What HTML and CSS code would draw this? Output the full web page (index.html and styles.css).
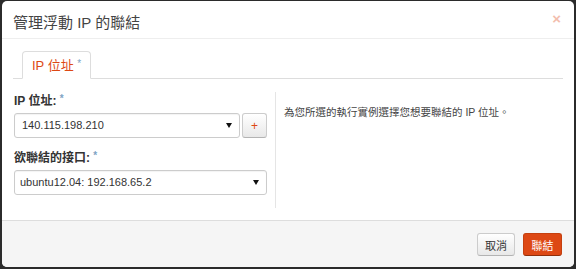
FILE: index.html
```html
<!DOCTYPE html>
<html lang="zh-Hant">
<head>
    <meta charset="UTF-8">
    <meta name="viewport" content="width=device-width, initial-scale=1.0">
    <title>管理浮動 IP 的聯結</title>
    <link rel="stylesheet" href="styles.css">
</head>
<body>
    <div class="modal">
        <div class="modal-header">
            <h3>管理浮動 IP 的聯結</h3>
            <span class="close">&times;</span>
        </div>

        <div class="modal-body">
            <ul class="tabs">
                <li class="tab active">IP 位址 <span class="req">*</span></li>
            </ul>

            <div class="tab-pane">
                <div class="left">
                    <div class="form-group">
                        <label>IP 位址: <span class="req">*</span></label>
                        <div class="input-row">
                            <div class="select first">
                                <span>140.115.198.210</span>
                                <span class="caret"></span>
                            </div>
                            <button class="btn btn-add">+</button>
                        </div>
                    </div>

                    <div class="form-group">
                        <label>欲聯結的接口: <span class="req">*</span></label>
                        <div class="select">
                            <span>ubuntu12.04: 192.168.65.2</span>
                            <span class="caret"></span>
                        </div>
                    </div>
                </div>

                <div class="right">
                    <p>為您所選的執行實例選擇您想要聯結的 IP 位址。</p>
                </div>
            </div>
        </div>

        <div class="modal-footer">
            <button class="btn btn-cancel">取消</button>
            <button class="btn btn-primary">聯結</button>
        </div>
    </div>
</body>
</html>
```

FILE: styles.css
```css
body {
    font-family: "Liberation Sans", "Noto Sans CJK TC", sans-serif;
    margin: 0;
    padding: 1px 2px 2px 2px;
    background-color: #2b2b2b;
    color: #333;
}

.modal {
    background-color: #fff;
    border-radius: 5px;
    height: 266px;
    display: flex;
    flex-direction: column;
    overflow: hidden;
}

.modal-header {
    height: 37px;
    border-bottom: 1px solid #eee;
    display: flex;
    align-items: center;
    justify-content: space-between;
    padding: 0 13px 0 11px;
}

.modal-header h3 {
    margin: 0;
    font-size: 15px;
    font-weight: normal;
    color: #444;
    padding-top: 3px;
}

.close {
    color: #dd4814;
    opacity: 0.35;
    font-size: 15px;
    font-weight: bold;
    margin-top: -3px;
}

.modal-body {
    flex: 1;
    padding: 12px 11px 0 11px;
}

.tabs {
    list-style: none;
    margin: 0;
    padding: 0 0 0 9px;
    border-bottom: 1px solid #ddd;
    display: flex;
    height: 27px;
}

.tab {
    width: 69px;
    height: 28px;
    border: 1px solid #ddd;
    border-bottom-color: #fff;
    border-radius: 4px 4px 0 0;
    background-color: #fff;
    color: #dd4814;
    font-size: 13px;
    line-height: 27px;
    padding-left: 9px;
    box-sizing: border-box;
}

.req {
    color: #7ea3c4;
    font-size: 10px;
    position: relative;
    top: -3px;
    line-height: 0;
}

.tab-pane {
    display: flex;
    margin-top: 13px;
    height: 116px;
}

.left {
    width: 253px;
    padding-left: 1px;
    margin-right: 8px;
}

.form-group {
    margin-bottom: 12px;
}

.form-group label {
    display: block;
    font-size: 12px;
    font-weight: bold;
    line-height: 16px;
    height: 16px;
    margin: 1px 0 4px 0;
}

.input-row {
    display: flex;
    gap: 2px;
}

.select {
    position: relative;
    height: 23px;
    border: 1px solid #ccc;
    border-radius: 3px;
    box-shadow: inset 0 1px 1px rgba(0, 0, 0, 0.05);
    font-size: 11px;
    line-height: 23px;
    padding-left: 5px;
    color: #333;
}

.select.first {
    flex: 1;
    padding-left: 7px;
}

.caret {
    position: absolute;
    right: 7px;
    top: 9px;
    border-left: 3px solid transparent;
    border-right: 3px solid transparent;
    border-top: 5px solid #111;
}

.btn {
    font-family: inherit;
    font-size: 11px;
    height: 23px;
    padding: 0;
    border: 1px solid #ccc;
    border-bottom-color: #b3b3b3;
    border-radius: 3px;
    background: linear-gradient(#fff, #e8e8e8);
    color: #333;
    white-space: nowrap;
    cursor: pointer;
}

.btn-add {
    width: 25px;
    height: 25px;
    color: #dd4814;
    font-size: 12px;
}

.btn-cancel {
    width: 38px;
}

.right {
    flex: 1;
    border-left: 1px solid #e5e5e5;
    padding-left: 8px;
}

.right p {
    margin: 12px 0 0 0;
    font-size: 10.5px;
    color: #444;
}

.modal-footer {
    height: 47px;
    border-top: 1px solid #ddd;
    background-color: #f5f5f5;
    display: flex;
    justify-content: flex-end;
    align-items: flex-start;
    gap: 8px;
    padding: 12px 12px 0 0;
    box-sizing: border-box;
}

.btn-primary {
    background: #dd4814;
    border-color: #c5400f;
    border-bottom-color: #8f2f0b;
    color: #fff;
    width: 39px;
}
```
